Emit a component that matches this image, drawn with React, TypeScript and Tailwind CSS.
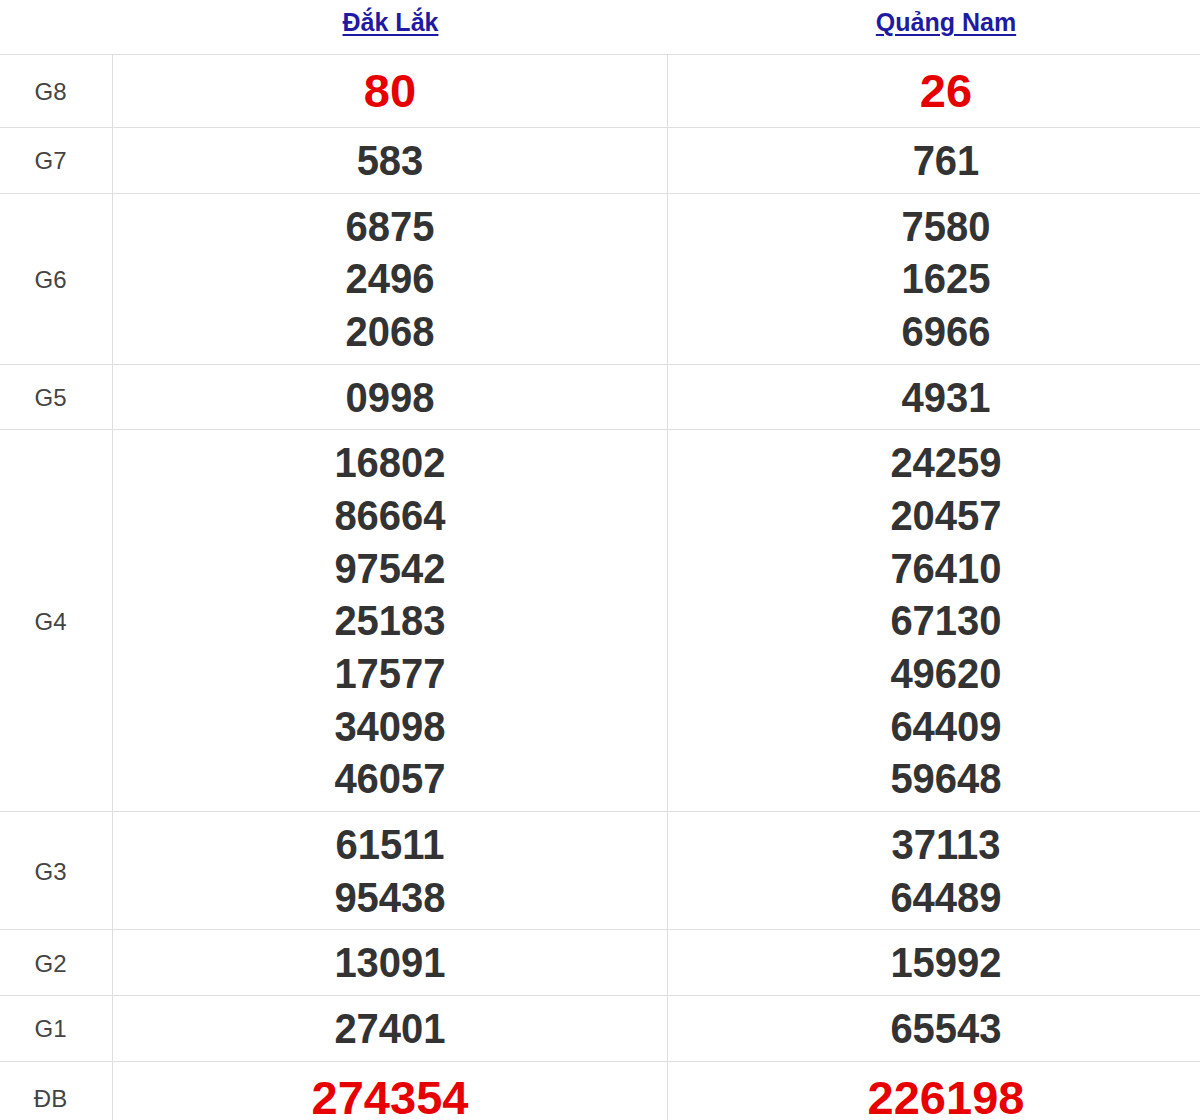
type Prize = {
    label: string
    left: string[]
    right: string[]
    big?: boolean
}

const prizes: Prize[] = [
    { label: 'G8', left: ['80'], right: ['26'], big: true },
    { label: 'G7', left: ['583'], right: ['761'] },
    { label: 'G6', left: ['6875', '2496', '2068'], right: ['7580', '1625', '6966'] },
    { label: 'G5', left: ['0998'], right: ['4931'] },
    {
        label: 'G4',
        left: ['16802', '86664', '97542', '25183', '17577', '34098', '46057'],
        right: ['24259', '20457', '76410', '67130', '49620', '64409', '59648'],
    },
    { label: 'G3', left: ['61511', '95438'], right: ['37113', '64489'] },
    { label: 'G2', left: ['13091'], right: ['15992'] },
    { label: 'G1', left: ['27401'], right: ['65543'] },
    { label: 'ĐB', left: ['274354'], right: ['226198'], big: true },
]

function Numbers({ values, big }: { values: string[]; big?: boolean }) {
    return (
        <div className="py-[6px] text-center">
            {values.map((v) => (
                <div
                    key={v}
                    className={
                        big
                            ? 'text-[47px] leading-[60px] font-bold text-[#e60000]'
                            : 'text-[40px] leading-[52.67px] font-bold text-[#333333] scale-y-[1.06]'
                    }
                >
                    {v}
                </div>
            ))}
        </div>
    )
}

export default function App() {
    return (
        <div className="w-[1200px] h-[1120px] overflow-hidden bg-white" style={{ fontFamily: '"Liberation Sans", Arial, sans-serif' }}>
            <div className="w-[1224px]">
                <div className="grid grid-cols-[113px_555px_556px] h-[55px] border-b border-[#dedede]">
                    <div></div>
                    <div className="text-center pt-[8px]">
                        <a href="#" className="text-[25px] leading-[28px] font-bold text-[#1f1aa3] underline decoration-[2px] underline-offset-[3px]">Đắk Lắk</a>
                    </div>
                    <div className="text-center pt-[8px]">
                        <a href="#" className="text-[25px] leading-[28px] font-bold text-[#1f1aa3] underline decoration-[2px] underline-offset-[3px]">Quảng Nam</a>
                    </div>
                </div>
                {prizes.map((p) => (
                    <div key={p.label} className="grid grid-cols-[113px_555px_556px] border-b border-[#dedede]">
                        <div className="border-r border-[#dedede] flex items-center justify-center pr-[11px] pt-[2px] text-[24px] text-[#444444]">
                            {p.label}
                        </div>
                        <div className="border-r border-[#dedede]">
                            <Numbers values={p.left} big={p.big} />
                        </div>
                        <div>
                            <Numbers values={p.right} big={p.big} />
                        </div>
                    </div>
                ))}
            </div>
        </div>
    )
}
